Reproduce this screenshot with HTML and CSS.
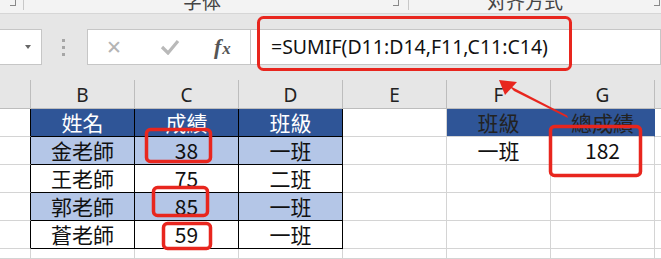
FILE: index.html
```html
<!DOCTYPE html>
<html>
<head>
    <title>SUMIF</title>
    <link rel="stylesheet" href="styles.css">
</head>
<body>
    <div class="app">
        <div class="ribbon">
            <div class="grp g1"><span class="launch"></span></div>
            <div class="grp g2"><span class="glabel">字体</span><span class="launch"></span></div>
            <div class="grp g3"><span class="glabel">对齐方式</span><span class="launch"></span></div>
        </div>

        <div class="fbar">
            <div class="namebox"><span class="caret"></span></div>
            <div class="dots"><i></i><i></i><i></i></div>
            <div class="btns">
                <span class="x">&#x2715;</span>
                <svg class="ok" width="20" height="16" viewBox="0 0 20 16"><path d="M2 8 L8 14 L18 2" fill="none" stroke="#b9b9b9" stroke-width="3.2"/></svg>
                <span class="fx"><i>f</i><i>x</i></span>
            </div>
            <div class="formula">=SUMIF(D11:D14,F11,C11:C14)</div>
        </div>

        <div class="sheet">
            <div class="c h"></div><div class="c h">B</div><div class="c h">C</div><div class="c h">D</div><div class="c h">E</div><div class="c h">F</div><div class="c h">G</div><div class="c h end"></div>

            <div class="c edge"></div><div class="c bx hd">姓名</div><div class="c bx hd">成績</div><div class="c bx hd">班級</div><div class="c"></div><div class="c hd2">班級</div><div class="c hd2">總成績</div><div class="c end"></div>

            <div class="c edge"></div><div class="c bx alt">金老師</div><div class="c bx alt">38</div><div class="c bx alt">一班</div><div class="c"></div><div class="c">一班</div><div class="c">182</div><div class="c end"></div>

            <div class="c edge"></div><div class="c bx">王老師</div><div class="c bx">75</div><div class="c bx">二班</div><div class="c"></div><div class="c"></div><div class="c"></div><div class="c end"></div>

            <div class="c edge"></div><div class="c bx alt">郭老師</div><div class="c bx alt">85</div><div class="c bx alt">一班</div><div class="c"></div><div class="c"></div><div class="c"></div><div class="c end"></div>

            <div class="c edge"></div><div class="c bx">蒼老師</div><div class="c bx">59</div><div class="c bx">一班</div><div class="c"></div><div class="c"></div><div class="c"></div><div class="c end"></div>

            <div class="c"></div><div class="c"></div><div class="c"></div><div class="c"></div><div class="c"></div><div class="c"></div><div class="c"></div><div class="c end"></div>
        </div>

        <!-- red annotation marks drawn over the screenshot -->
        <svg class="marks" width="661" height="259" viewBox="0 0 661 259">
            <g fill="none" stroke="#e8261e" stroke-linejoin="round">
                <rect x="258.5" y="17.5" width="312" height="52" rx="5" stroke-width="3"/>
                <rect x="146.5" y="129.5" width="64" height="32" rx="4" stroke-width="3.5"/>
                <rect x="153.5" y="187.5" width="54" height="28" rx="4" stroke-width="3.5"/>
                <rect x="163.5" y="223.5" width="47" height="25" rx="4" stroke-width="3.5"/>
                <rect x="550.5" y="126.5" width="90" height="49" rx="4" stroke-width="3.5"/>
            </g>
            <g fill="#e8261e">
                <polygon points="499,80 517,82 505,95"/>
                <polygon points="508,85 514,91 568,118 567,115.5"/>
            </g>
        </svg>
    </div>
</body>
</html>
```

FILE: styles.css
```css
body { margin: 0; background: #fff; font-family: "Noto Sans", "Noto Sans CJK TC", sans-serif; }
.app { position: relative; width: 661px; height: 259px; overflow: hidden; }

/* ribbon strip */
.ribbon { display: flex; height: 13px; background: #f3f3f3; border-bottom: 1px solid #d6d6d6; overflow: hidden; }
.grp { display: flex; align-items: flex-start; border-right: 1px solid #c8c8c8; height: 10px; box-sizing: border-box; }
.g1 { width: 24px; justify-content: flex-end; padding-right: 7px; }
.g2 { width: 385px; padding-right: 9px; }
.g3 { flex: 1; border-right: none; padding-right: 1px; }
.g2 .glabel { margin-left: 159px; }
.g3 .glabel { margin-left: 78px; }
.glabel { font-family: "Noto Sans CJK SC", sans-serif; font-size: 19px; line-height: 19px; margin-top: -9px; color: #444; margin-right: auto; }
.launch { width: 5px; height: 5px; border-right: 1px solid #888; border-bottom: 1px solid #888; margin-top: 0; }

/* formula bar */
.fbar { display: flex; align-items: center; height: 66px; background: #e6e6e6; }
.namebox { width: 43px; height: 36px; margin-left: -1px; box-sizing: border-box; background: #fff; border: 1px solid #c6c6c6; display: flex; align-items: center; justify-content: flex-end; padding-right: 10px; }
.caret { width: 0; height: 0; border-left: 3px solid transparent; border-right: 3px solid transparent; border-top: 4px solid #666; }
.dots { display: flex; flex-direction: column; gap: 4px; margin-left: 20px; margin-right: 22px; }
.dots i { width: 3px; height: 3px; background: #a6a6a6; }
.btns { width: 164px; height: 36px; box-sizing: border-box; background: #fff; border: 1px solid #c6c6c6; display: flex; align-items: center; padding-left: 18px; }
.x { color: #b4b4b4; font-size: 19px; font-family: "DejaVu Sans", sans-serif; }
.ok { margin-left: 38px; }
.fx { margin-left: 34px; font-family: "Liberation Serif", serif; font-size: 22px; color: #555; font-weight: bold; }
.fx i + i { font-size: 17px; margin-left: 1px; }
.formula { flex: 1; height: 36px; box-sizing: border-box; background: #fff; border: 1px solid #c6c6c6; border-left: none; padding-left: 20px; font-size: 19.5px; line-height: 34px; color: #111; }

/* grid */
.sheet { display: grid; grid-template-columns: 31px repeat(6, 104px) 1fr; grid-template-rows: 29px repeat(5, 28px) 1fr; height: 179px; font-family: "Noto Sans CJK TC", sans-serif; font-size: 21px; color: #111; }
.c { box-sizing: border-box; border-right: 1px solid #d4d4d4; border-bottom: 1px solid #d4d4d4; display: flex; justify-content: center; line-height: 27px; white-space: nowrap; }
.end { border-right: none; }
.h { background: #e6e6e6; border-right-color: #bdbdbd; border-bottom-color: #bdbdbd; font-family: "Noto Sans", sans-serif; font-size: 19px; line-height: 30px; color: #222; }
.edge { border-right-color: #000; }
.bx { border-right-color: #000; border-bottom-color: #000; }
.hd { background: #2f5597; color: #fff; }
.hd2 { background: #2f5597; color: #222; border-right-color: #2f5597; }
.alt { background: #b4c6e7; }

.marks { position: absolute; top: 0; left: 0; pointer-events: none; }
```
